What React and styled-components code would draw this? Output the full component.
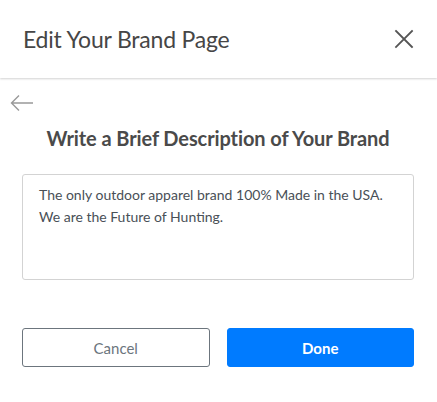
import React from "react";
import styled, { createGlobalStyle } from "styled-components";

const Global = createGlobalStyle`
  * { box-sizing: border-box; }
  html, body { margin: 0; padding: 0; background: #fff; }
  body { font-family: "Lato", "Liberation Sans", sans-serif; }
`;

const Modal = styled.div`
  width: 437px;
  height: 402px;
  background: #fff;
  display: flex;
  flex-direction: column;
`;

const Header = styled.header`
  height: 78px;
  flex: 0 0 78px;
  display: flex;
  align-items: center;
  justify-content: space-between;
  padding: 0 23px 0 23px;
  box-shadow: 0 1px 2px rgba(0, 0, 0, 0.18);
  position: relative;
  z-index: 1;
`;

const HeaderTitle = styled.h1`
  margin: 0;
  font-size: 23px;
  font-weight: 400;
  color: #464646;
  letter-spacing: -0.2px;
`;

const IconButton = styled.button`
  border: 0;
  background: none;
  padding: 0;
  width: ${(p) => p.$w || 20}px;
  height: 20px;
  display: flex;
  align-items: center;
  justify-content: center;
  cursor: pointer;
  color: ${(p) => p.$color || "#555"};
`;

const Body = styled.div`
  display: flex;
  flex-direction: column;
  padding: 16px 23px 0 22px;
`;

const BackRow = styled.div`
  display: flex;
  margin-left: -12px;
  height: 18px;
  align-items: center;
`;

const Title = styled.h2`
  margin: 14px 0 0;
  text-align: center;
  font-size: 20px;
  font-weight: 700;
  color: #4a4a4a;
  letter-spacing: -0.1px;
`;

const TextArea = styled.textarea`
  margin-top: 24px;
  width: 100%;
  height: 106px;
  border: 1px solid #d3d3d3;
  border-radius: 3px;
  padding: 9px 16px;
  resize: none;
  font-family: inherit;
  font-size: 14px;
  line-height: 22px;
  color: #495057;
  outline: none;
`;

const Actions = styled.div`
  margin-top: 48px;
  display: grid;
  grid-template-columns: 1fr 1fr;
  gap: 17px;
`;

const Button = styled.button`
  height: 39px;
  border-radius: 3px;
  font-family: inherit;
  font-size: 15px;
  cursor: pointer;
  border: 1px solid ${(p) => (p.$primary ? "#007bff" : "#6c757d")};
  background: ${(p) => (p.$primary ? "#007bff" : "#fff")};
  color: ${(p) => (p.$primary ? "#fff" : "#6c757d")};
  font-weight: ${(p) => (p.$primary ? 700 : 400)};
`;

export default function App() {
  return (
    <>
      <Global />
      <Modal>
        <Header>
          <HeaderTitle>Edit Your Brand Page</HeaderTitle>
          <IconButton aria-label="Close" $color="#555">
            <svg width="20" height="20" viewBox="0 0 20 20" fill="none" stroke="currentColor" strokeWidth="1.8" strokeLinecap="square">
              <path d="M2 2L18 18M18 2L2 18" />
            </svg>
          </IconButton>
        </Header>
        <Body>
          <BackRow>
            <IconButton aria-label="Back" $color="#999" $w={24}>
              <svg width="24" height="18" viewBox="0 0 24 18" fill="none" stroke="currentColor" strokeWidth="1.4">
                <path d="M23 9H2M9 1.5L1.5 9L9 16.5" />
              </svg>
            </IconButton>
          </BackRow>
          <Title>Write a Brief Description of Your Brand</Title>
          <TextArea
            readOnly
            value={"The only outdoor apparel brand 100% Made in the USA.\nWe are the Future of Hunting."}
          />
          <Actions>
            <Button>Cancel</Button>
            <Button $primary>Done</Button>
          </Actions>
        </Body>
      </Modal>
    </>
  );
}
